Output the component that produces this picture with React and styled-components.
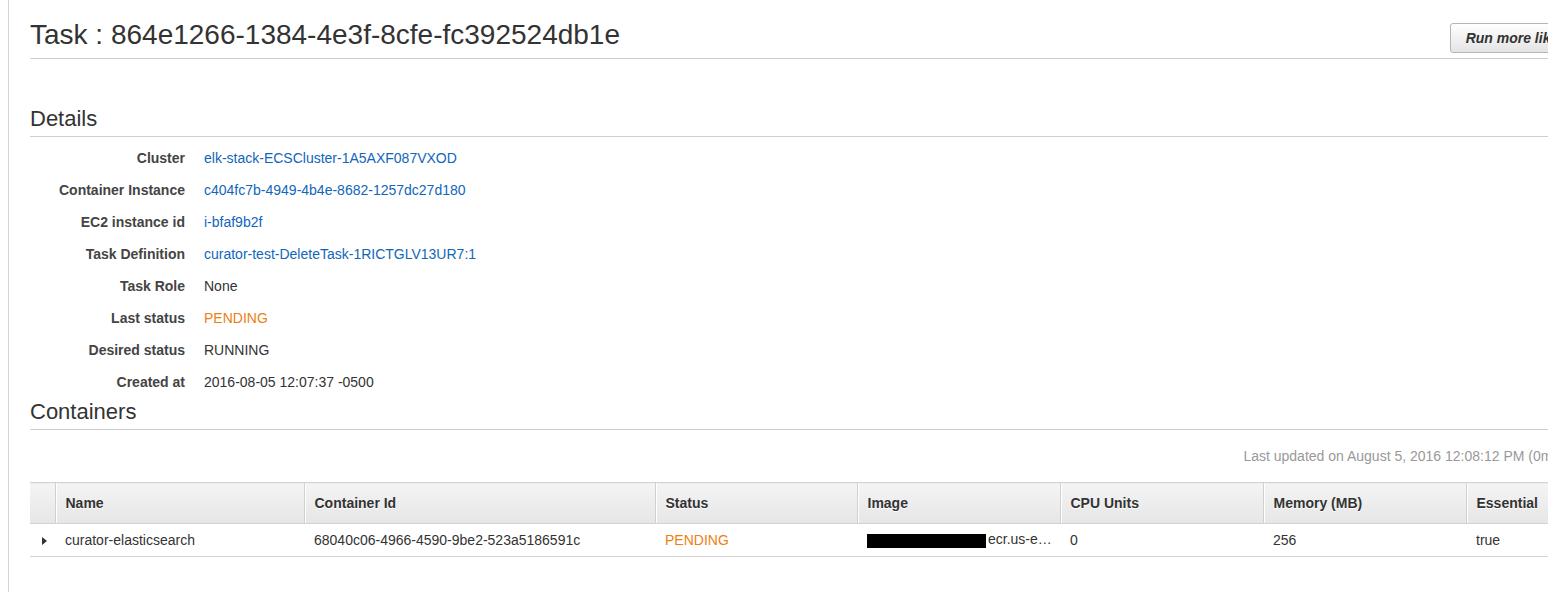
import React from 'react';
import styled, { createGlobalStyle } from 'styled-components';

const GlobalStyle = createGlobalStyle`
  html, body {
    margin: 0;
    padding: 0;
    background: #fff;
    overflow: hidden;
  }
  body {
    font-family: "Liberation Sans", Arial, sans-serif;
    font-size: 14px;
    color: #333;
  }
`;

const Shell = styled.div`
  margin-left: 8px;
  border-left: 1px solid #d5d5d5;
  min-height: 592px;
  padding-left: 21px;
  box-sizing: border-box;
`;

const Content = styled.div`
  width: 1573px;
`;

const TitleBar = styled.div`
  display: flex;
  justify-content: space-between;
  align-items: flex-start;
  padding-top: 19px;
  padding-bottom: 5px;
  border-bottom: 1px solid #cfcfcf;
`;

const Title = styled.h1`
  margin: 0;
  font-size: 28px;
  line-height: 32px;
  font-weight: normal;
  color: #333;
`;

const Button = styled.button`
  margin-top: 4px;
  height: 30px;
  padding: 0 15px;
  border: 1px solid #b5b5b5;
  border-radius: 3px;
  background: linear-gradient(#ffffff, #e4e4e4);
  font-family: "Liberation Sans", Arial, sans-serif;
  font-size: 14px;
  font-weight: bold;
  font-style: italic;
  color: #333;
  white-space: nowrap;
`;

const SectionTitle = styled.h2`
  margin: ${(p) => p.$top}px 0 0;
  padding-bottom: 4px;
  font-size: 22px;
  line-height: 26px;
  font-weight: normal;
  color: #333;
  border-bottom: 1px solid #cfcfcf;
`;

const DetailList = styled.dl`
  margin: 5px 0 0;
  display: grid;
  grid-template-columns: 155px 1fr;
  column-gap: 19px;
  grid-auto-rows: 32px;
  align-items: center;
`;

const Label = styled.dt`
  text-align: right;
  font-weight: bold;
  color: #444;
`;

const Value = styled.dd`
  margin: 0;
  color: ${(p) => (p.$tone === 'link' ? '#1166bb' : p.$tone === 'warn' ? '#ec8012' : '#333')};
`;

const Updated = styled.div`
  margin-top: 17px;
  text-align: right;
  line-height: 18px;
  color: #999;
`;

const Table = styled.table`
  margin-top: 17px;
  width: 100%;
  border-collapse: collapse;
  table-layout: fixed;
`;

const Th = styled.th`
  height: 40px;
  padding: 0 9px;
  text-align: left;
  font-weight: bold;
  color: #333;
  text-shadow: 0 1px 0 #fff;
  background: linear-gradient(#f4f4f4, #e6e6e6);
  border-top: 1px solid #d3d3d3;
  border-bottom: 1px solid #d3d3d3;
  border-left: 1px solid #fff;
  box-shadow: inset -1px 0 0 #d0d0d0;
  &:first-child {
    border-left: none;
  }
`;

const Td = styled.td`
  height: 31px;
  padding: 0 9px 1px;
  color: ${(p) => (p.$warn ? '#ec8012' : '#333')};
  border-bottom: 1px solid #d3d3d3;
  white-space: nowrap;
  overflow: hidden;
  text-overflow: ellipsis;
`;

const Caret = styled.span`
  display: inline-block;
  margin-left: 3px;
  width: 0;
  height: 0;
  border-top: 4px solid transparent;
  border-bottom: 4px solid transparent;
  border-left: 5px solid #333;
  vertical-align: middle;
`;

const Redacted = styled.span`
  display: inline-block;
  width: 119px;
  height: 14px;
  margin-right: 2px;
  background: #000;
  vertical-align: middle;
`;

const details = [
  { label: 'Cluster', value: 'elk-stack-ECSCluster-1A5AXF087VXOD', tone: 'link' },
  { label: 'Container Instance', value: 'c404fc7b-4949-4b4e-8682-1257dc27d180', tone: 'link' },
  { label: 'EC2 instance id', value: 'i-bfaf9b2f', tone: 'link' },
  { label: 'Task Definition', value: 'curator-test-DeleteTask-1RICTGLV13UR7:1', tone: 'link' },
  { label: 'Task Role', value: 'None' },
  { label: 'Last status', value: 'PENDING', tone: 'warn' },
  { label: 'Desired status', value: 'RUNNING' },
  { label: 'Created at', value: '2016-08-05 12:07:37 -0500' },
];

const columns = [
  { name: '', width: 26 },
  { name: 'Name', width: 249 },
  { name: 'Container Id', width: 351 },
  { name: 'Status', width: 202 },
  { name: 'Image', width: 203 },
  { name: 'CPU Units', width: 203 },
  { name: 'Memory (MB)', width: 203 },
  { name: 'Essential' },
];

const App = () => (
  <>
    <GlobalStyle />
    <Shell>
      <Content>
        <TitleBar>
          <Title>Task : 864e1266-1384-4e3f-8cfe-fc392524db1e</Title>
          <Button>Run more like this</Button>
        </TitleBar>

        <SectionTitle $top={47}>Details</SectionTitle>
        <DetailList>
          {details.map((d) => (
            <React.Fragment key={d.label}>
              <Label>{d.label}</Label>
              <Value $tone={d.tone}>{d.value}</Value>
            </React.Fragment>
          ))}
        </DetailList>

        <SectionTitle $top={1}>Containers</SectionTitle>
        <Updated>Last updated on August 5, 2016 12:08:12 PM (0m 3s ago)</Updated>

        <Table>
          <colgroup>
            {columns.map((c, i) => (
              <col key={i} style={c.width ? { width: c.width } : undefined} />
            ))}
          </colgroup>
          <thead>
            <tr>
              {columns.map((c, i) => (
                <Th key={i}>{c.name}</Th>
              ))}
            </tr>
          </thead>
          <tbody>
            <tr>
              <Td><Caret /></Td>
              <Td>curator-elasticsearch</Td>
              <Td>68040c06-4966-4590-9be2-523a5186591c</Td>
              <Td $warn>PENDING</Td>
              <Td><Redacted />ecr.us-east-1.amazonaws.com/curator</Td>
              <Td>0</Td>
              <Td>256</Td>
              <Td>true</Td>
            </tr>
          </tbody>
        </Table>
      </Content>
    </Shell>
  </>
);

export default App;
